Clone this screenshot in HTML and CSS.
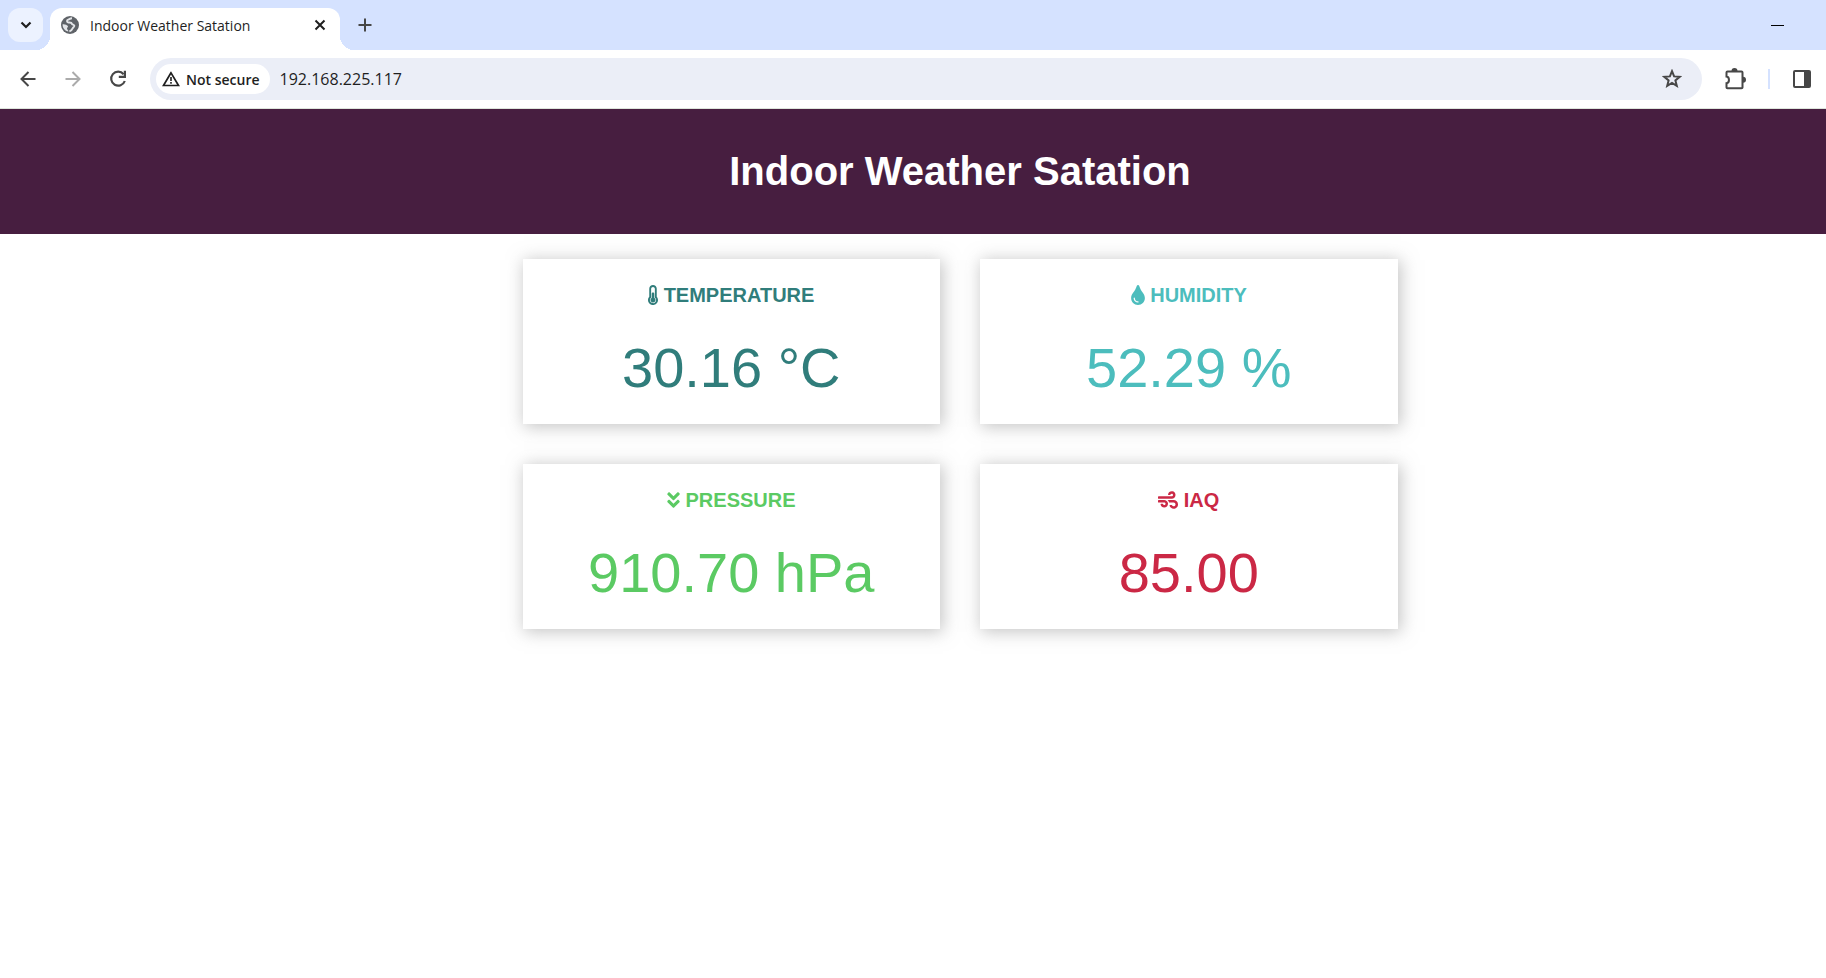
FILE: index.html
```html
<!DOCTYPE html>
<html lang="en">
<head>
<meta charset="utf-8">
<title>Indoor Weather Satation</title>
<link rel="stylesheet" href="styles.css">
</head>
<body>
<div class="tabstrip">
  <button class="tab-search" aria-label="Search tabs"><svg width="12" height="8" viewBox="0 0 12 8"><path d="M1.500 1.500L6 6l4.500-4.500" fill="none" stroke="currentColor" stroke-width="2.200"/></svg></button>
  <div class="tab">
    <svg class="globe" width="20" height="20" viewBox="0 0 20 20"><circle cx="10" cy="10" r="9" fill="#5f6368"/><path d="M12 3.200c-2.200 0-2.600 1.300-4.200 1.700-1.100.4-1 2 .2 2.400 1.500.4 3.600-.2 3.900 1.400.2 1.200 2 .7 2.400 1.900.4 1.300-1.200 1.600-1.700 2.700-.5 1.200-1.600 2.400-3.200 3.200" fill="none" stroke="#e3e5e8" stroke-width="1.900"/><path d="M2.600 9.200c1.700-.3 4.600.4 5.300 1.900.4 1-.8 1.500-.9 2.600 0 1 1.300 1 1.400 2.900-3.500-.6-6-3.700-5.800-7.400z" fill="#e3e5e8"/></svg>
    <span class="tab-title">Indoor Weather Satation</span>
    <button class="icon-btn tab-close" aria-label="Close tab"><svg width="12" height="12" viewBox="0 0 12 12"><path d="M1.500 1.500l9 9M10.500 1.500l-9 9" stroke="currentColor" stroke-width="2"/></svg></button>
  </div>
  <button class="icon-btn new-tab" aria-label="New tab"><svg width="14" height="14" viewBox="0 0 14 14"><path d="M7 .5v13M.5 7h13" stroke="currentColor" stroke-width="2"/></svg></button>
  <button class="icon-btn minimize" aria-label="Minimize"><svg width="13" height="13" viewBox="0 0 13 13"><path d="M0 6.500h13" stroke="#000" stroke-width="1"/></svg></button>
</div>
<div class="toolbar">
  <nav class="nav-buttons">
    <button class="icon-btn" aria-label="Back"><svg width="16" height="16" viewBox="0 0 16 16"><path d="M15.500 8H2M8.500 1L1.500 8l7 7" fill="none" stroke="currentColor" stroke-width="2"/></svg></button>
    <button class="icon-btn" aria-label="Forward" disabled><svg width="16" height="16" viewBox="0 0 16 16"><path d="M.5 8H14M7.500 1l7 7-7 7" fill="none" stroke="currentColor" stroke-width="2"/></svg></button>
    <button class="icon-btn" aria-label="Reload"><svg width="18" height="18" viewBox="0 0 18 18"><path d="M14.600 4.200A7 7 0 1 0 15.800 11" fill="none" stroke="currentColor" stroke-width="2.200"/><path d="M15.900.8v6.100H9.800" fill="none" stroke="currentColor" stroke-width="2.200"/></svg></button>
  </nav>
  <div class="omnibox">
    <button class="chip"><svg width="18" height="16" viewBox="0 0 18 16"><path d="M9 1.800L1.500 14.500h15z" fill="none" stroke="currentColor" stroke-width="1.700"/><path d="M9 6v4M9 11v1.700" stroke="currentColor" stroke-width="1.600"/></svg>Not secure</button>
    <input class="url" type="text" aria-label="Address" value="192.168.225.117">
    <button class="icon-btn" aria-label="Bookmark"><svg width="20" height="20" viewBox="0 0 20 20"><path d="M10 2.200l2.100 5.200 5.600.4-4.300 3.600 1.400 5.500-4.800-3-4.800 3 1.400-5.500-4.300-3.600 5.600-.4z" fill="none" stroke="currentColor" stroke-width="2"/></svg></button>
  </div>
  <button class="icon-btn extensions" aria-label="Extensions"><svg width="22" height="22" viewBox="0 0 22 22"><path d="M2.500 4.500q0-1 1-1h14q1 0 1 1v15q0 .8-1 .8h-14q-1 0-1-.8v-4.300c3.300-.6 3.300-6 0-6.600z" fill="none" stroke="currentColor" stroke-width="2"/><path d="M7.500 3a3 3 0 0 1 6 0zM19 8.800a3 3 0 0 1 0 6z" fill="currentColor"/></svg></button>
  <span class="divider"></span>
  <button class="icon-btn side-panel" aria-label="Side panel"><svg width="20" height="20" viewBox="0 0 20 20"><rect x="2" y="2" width="16" height="16" rx="1" fill="none" stroke="currentColor" stroke-width="2"/><path d="M12 2h6v16h-6z" fill="currentColor"/></svg></button>
</div>
<header class="topnav"><h1>Indoor Weather Satation</h1></header>
<main class="content">
  <div class="cards">
    <section class="card temperature">
      <h2><svg width="10" height="20" viewBox="0 0 256 512"><path d="M192 384c0 35.346-28.654 64-64 64s-64-28.654-64-64c0-23.685 12.876-44.349 32-55.417V224c0-17.673 14.327-32 32-32s32 14.327 32 32v104.583c19.124 11.068 32 31.732 32 55.417zm32-84.653c19.912 22.563 32 52.194 32 84.653 0 70.696-57.303 128-128 128-.299 0-.609-.001-.909-.003C56.789 511.509-.357 453.636.002 383.333.166 351.135 12.225 321.755 32 299.347V96c0-53.019 42.981-96 96-96s96 42.981 96 96v203.347zM208 384c0-34.339-19.370-52.190-32-66.502V96c0-26.467-21.533-48-48-48S80 69.533 80 96v221.498c-12.732 14.428-31.825 32.100-31.999 66.080-.224 43.876 35.563 80.116 79.423 80.420L128 464c44.112 0 80-35.888 80-80z"/></svg> TEMPERATURE</h2>
      <p>30.16 &deg;C</p>
    </section>
    <section class="card humidity">
      <h2><svg width="14" height="20" viewBox="0 0 352 512"><path d="M205.220 22.090c-7.940-28.780-49.440-30.120-58.440 0C100.010 179.850 0 222.720 0 333.910 0 432.350 78.720 512 176 512s176-79.650 176-178.090c0-111.750-99.790-153.340-146.780-311.820zM176 448c-61.750 0-112-50.250-112-112 0-8.840 7.160-16 16-16s16 7.160 16 16c0 44.110 35.890 80 80 80 8.840 0 16 7.160 16 16s-7.160 16-16 16z"/></svg> HUMIDITY</h2>
      <p>52.29 %</p>
    </section>
    <section class="card pressure">
      <h2><svg width="13" height="20" viewBox="0 0 320 512"><path d="M143 256.300L7 120.300c-9.400-9.400-9.400-24.600 0-33.900l22.600-22.600c9.400-9.400 24.600-9.400 33.900 0l96.400 96.400 96.400-96.400c9.400-9.400 24.600-9.400 33.900 0L313 86.300c9.400 9.400 9.400 24.600 0 33.900l-136 136c-9.400 9.500-24.600 9.500-34 .1zm34 192l136-136c9.400-9.400 9.400-24.600 0-33.900l-22.600-22.600c-9.400-9.400-24.600-9.400-33.900 0L160 352.100l-96.400-96.400c-9.400-9.400-24.600-9.400-33.900 0L7 278.300c-9.400 9.400-9.400 24.600 0 33.900l136 136c9.400 9.500 24.600 9.500 34 .1z"/></svg> PRESSURE</h2>
      <p>910.70 hPa</p>
    </section>
    <section class="card iaq">
      <h2><svg width="20" height="20" viewBox="0 0 512 512"><path d="M156.700 256H16c-8.800 0-16 7.200-16 16v32c0 8.800 7.200 16 16 16h142.200c15.900 0 30.800 10.900 33.400 26.600 3.300 20-12.100 37.400-31.600 37.400-14.100 0-26.100-9.200-30.400-21.900-2.100-6.300-8.600-10.100-15.200-10.100H81.600c-9.800 0-17.700 8.800-15.900 18.400 8.600 44.100 47.600 77.600 94.200 77.600 57.100 0 102.700-50.100 95.200-108.600C249 291 205.400 256 156.700 256zM16 224h336c59.700 0 106.800-54.800 93.800-116.700-7.600-36.200-36.900-65.500-73.100-73.100-55.400-11.600-105.100 24.900-114.900 75.500-1.900 9.600 6.100 18.300 15.800 18.300h32.800c6.700 0 13.100-3.800 15.200-10.100C325.900 105.200 337.900 96 352 96c19.400 0 34.900 17.400 31.600 37.400-2.600 15.700-17.400 26.600-33.400 26.600H16c-8.800 0-16 7.200-16 16v32c0 8.800 7.200 16 16 16zm384 32H243.700c19.300 16.600 33.200 38.800 39.800 64H400c26.500 0 48 21.500 48 48s-21.500 48-48 48c-17.900 0-33.300-9.900-41.600-24.400-2.900-5-8.700-7.600-14.500-7.600h-33.800c-10.900 0-19 10.800-15.300 21.100 17.800 50.600 70.500 84.800 129.400 72.300 41.200-8.700 75.100-41.600 84.700-82.700C526 321.500 470.500 256 400 256z"/></svg> IAQ</h2>
      <p>85.00</p>
    </section>
  </div>
</main>
</body>
</html>
```
FILE: styles.css
```css
* { box-sizing: border-box; }
body {
  margin: 0;
  background: #fff;
  color: #1f1f1f;
  font-family: "Liberation Sans", Arial, sans-serif;
  overflow-x: hidden;
}
button {
  border: 0;
  padding: 0;
  background: none;
  color: inherit;
  font: inherit;
}
svg { display: block; flex: none; }
.icon-btn {
  display: flex;
  align-items: center;
  justify-content: center;
  color: #474747;
}
.icon-btn:disabled { color: #ababab; }

.tabstrip {
  display: flex;
  align-items: flex-end;
  height: 50px;
  padding: 8px 42px 0 8px;
  background: #d5e2ff;
  font-family: "Open Sans", "Noto Sans", sans-serif;
}
.tab-search {
  display: flex;
  align-items: center;
  justify-content: center;
  align-self: flex-start;
  width: 35px;
  height: 34px;
  margin-right: 7px;
  border-radius: 12px;
  background: #ecf2ff;
}
.tab {
  position: relative;
  display: flex;
  align-items: center;
  width: 290px;
  height: 42px;
  padding: 0 12px 8px 10px;
  border-radius: 12px 12px 0 0;
  background: #fff;
}
.tab::before,
.tab::after {
  content: "";
  position: absolute;
  bottom: 0;
  width: 14px;
  height: 14px;
}
.tab::before {
  right: 100%;
  background: radial-gradient(circle at 0 0, transparent 14px, #fff 14px);
}
.tab::after {
  left: 100%;
  background: radial-gradient(circle at 100% 0, transparent 14px, #fff 14px);
}
.tab-title {
  flex: 1;
  margin-left: 10px;
  font-size: 14px;
  white-space: nowrap;
}
.tab-close { width: 16px; height: 16px; color: #1f1f1f; }
.new-tab { width: 30px; height: 34px; margin: 0 auto 8px 10px; }
.minimize { height: 34px; margin-bottom: 8px; }

.toolbar {
  display: flex;
  align-items: center;
  height: 59px;
  border-bottom: 1px solid #dde5dc;
  background: #fff;
  font-family: "Open Sans", "Noto Sans", sans-serif;
}
.nav-buttons { display: flex; width: 150px; padding-left: 5px; }
.nav-buttons .icon-btn { width: 45px; height: 40px; }
.omnibox {
  display: flex;
  flex: 1;
  align-items: center;
  height: 42px;
  padding: 0 20px 0 6px;
  border-radius: 21px;
  background: #ebeef7;
}
.chip {
  display: flex;
  align-items: center;
  gap: 6px;
  height: 30px;
  padding: 0 10px 0 6px;
  border-radius: 15px;
  background: #fff;
  font-size: 14px;
  font-weight: 600;
  white-space: nowrap;
}
.url {
  flex: 1;
  min-width: 0;
  margin-left: 10px;
  padding: 0;
  border: 0;
  outline: 0;
  background: none;
  color: #1f1f1f;
  font: 16px "Open Sans", "Noto Sans", sans-serif;
}
.extensions { margin-left: 22px; }
.divider { width: 2px; height: 20px; margin: 0 22px; background: #d5e2ff; }
.side-panel { margin-right: 14px; }

.topnav,
.content { padding-left: 94px; }
.topnav {
  background: #471e40;
  color: #fff;
  text-align: center;
}
.topnav h1 {
  margin: 0;
  padding: 40px 0;
  font-size: 40px;
  line-height: 45px;
}
.cards {
  display: grid;
  grid-template-columns: 1fr 1fr;
  gap: 40px;
  max-width: 875px;
  margin: 25px auto;
}
.card {
  padding: 25px 20px 24px;
  background: #fff;
  box-shadow: 2px 2px 16px 1px rgba(140, 140, 140, 0.5);
  text-align: center;
}
.card h2 {
  margin: 0 0 28px;
  font-size: 20px;
  line-height: 23px;
}
.card h2 svg {
  display: inline-block;
  height: 20px;
  vertical-align: -3px;
  fill: currentColor;
}
.card p {
  margin: 0;
  font-size: 56px;
  line-height: 65px;
}
.temperature { color: #307d7b; }
.humidity { color: #4cbdbd; }
.pressure { color: #5bca63; }
.iaq { color: #cb2845; }
```
